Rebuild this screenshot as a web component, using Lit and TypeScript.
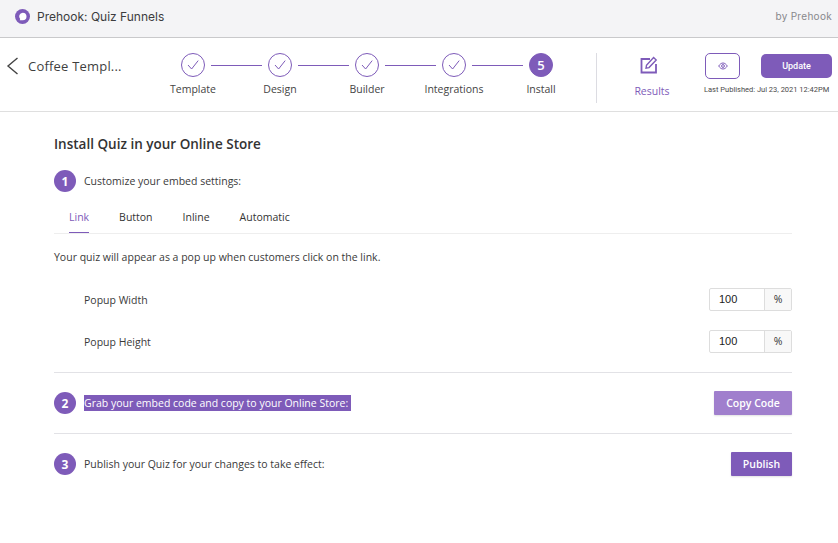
import { LitElement, html, css, TemplateResult } from 'lit';
import { customElement } from 'lit/decorators.js';
import { classMap } from 'lit/directives/class-map.js';

const STEPS = ['Template', 'Design', 'Builder', 'Integrations', 'Install'];
const TABS = ['Link', 'Button', 'Inline', 'Automatic'];

@customElement('app-root')
export class AppRoot extends LitElement {
  static styles = css`
    :host {
      display: block;
      height: 543px;
      background: #fff;
      overflow: hidden;
      font-family: 'Open Sans', sans-serif;
      font-size: 10.5px;
      color: #3a3a3a;
    }

    .topbar {
      height: 32px;
      box-sizing: content-box;
      display: flex;
      align-items: center;
      padding: 0 6px 5px 15px;
      background: #f4f4f6;
      border-bottom: 1px solid #c9c9cb;
      font-family: Inter, sans-serif;
    }

    .topbar svg {
      display: block;
      margin-right: 7px;
    }

    .app-name {
      font-size: 12px;
      color: #3c3c3e;
    }

    .by {
      margin-left: auto;
      font-size: 10px;
      letter-spacing: 0.3px;
      color: #88888c;
    }

    .header {
      height: 73px;
      display: flex;
      border-bottom: 1px solid #dfdfdf;
    }

    .back {
      display: flex;
      align-items: flex-start;
      width: 181px;
      padding: 18px 0 0 6px;
      box-sizing: border-box;
    }

    .back svg {
      display: block;
      margin: 1px 9px 0 0;
    }

    .back span {
      font-size: 13px;
      line-height: 20px;
      letter-spacing: 0.2px;
      color: #3f3f3f;
    }

    .steps {
      display: flex;
      align-items: flex-start;
      padding-top: 15px;
      width: 372px;
    }

    .step {
      width: 24px;
      display: flex;
      flex-direction: column;
      align-items: center;
    }

    .circle {
      width: 24px;
      height: 24px;
      box-sizing: border-box;
      border: 1px solid #7e5bb9;
      border-radius: 50%;
      display: flex;
      align-items: center;
      justify-content: center;
      flex: none;
    }

    .circle.current {
      background: #7e5bb9;
      color: #fff;
      font-size: 13px;
      font-weight: 600;
    }

    .step-label {
      margin-top: 5px;
      font-size: 10.5px;
      line-height: 14px;
      white-space: nowrap;
      color: #444;
    }

    .connector {
      width: 51px;
      height: 1px;
      margin: 12px 6px 0;
      background: #7e5bb9;
      flex: none;
    }

    .divider-v {
      width: 1px;
      height: 50px;
      margin: 15px 0 0 43px;
      background: #dcdce2;
    }

    .results {
      width: 110px;
      padding-top: 18px;
      display: flex;
      flex-direction: column;
      align-items: center;
      color: #7e5bb9;
      font-size: 10.5px;
      line-height: 14px;
    }

    .results svg {
      margin-right: 7px;
    }

    .results span {
      margin-top: 10px;
    }

    .publish-box {
      padding: 15px 0 0 0;
      margin-left: -3px;
      width: 128px;
      display: flex;
      flex-direction: column;
    }

    .publish-actions {
      display: flex;
      justify-content: space-between;
      align-items: center;
    }

    .eye {
      width: 35px;
      height: 26px;
      box-sizing: border-box;
      border: 1px solid #7e5bb9;
      border-radius: 5px;
      display: flex;
      align-items: center;
      justify-content: center;
      margin-left: 1px;
    }

    .update {
      width: 71px;
      height: 24px;
      border-radius: 5px;
      background: #7e5bb9;
      color: #fff;
      font-family: Roboto, sans-serif;
      font-size: 9px;
      font-weight: 500;
      display: flex;
      align-items: center;
      justify-content: center;
    }

    .last {
      margin-top: 5px;
      font-family: Roboto, sans-serif;
      font-size: 7.5px;
      line-height: 11px;
      white-space: nowrap;
      color: #4a4a4a;
    }

    main {
      width: 738px;
      margin-left: 54px;
    }

    h1 {
      margin: 0;
      padding-top: 22px;
      font-size: 13.5px;
      line-height: 20px;
      font-weight: 600;
      color: #333;
    }

    .section {
      display: flex;
      align-items: center;
      gap: 8px;
    }

    .num {
      width: 22px;
      height: 22px;
      border-radius: 50%;
      background: #7e5bb9;
      color: #fff;
      font-size: 12px;
      font-weight: 700;
      display: flex;
      align-items: center;
      justify-content: center;
      flex: none;
    }

    .first {
      margin-top: 16px;
    }

    .tabs {
      margin-top: 13px;
      height: 28px;
      display: flex;
      padding-left: 15px;
      border-bottom: 1px solid #eee;
    }

    .tab {
      height: 28px;
      box-sizing: border-box;
      line-height: 25px;
      margin-right: 30px;
      color: #333;
    }

    .tab.active {
      color: #7e5bb9;
      border-bottom: 1px solid #7e5bb9;
    }

    .intro {
      margin: 16px 0 0;
      line-height: 15px;
    }

    .field {
      display: flex;
      align-items: center;
      justify-content: space-between;
      height: 23px;
      padding-left: 30px;
      margin-top: 19px;
    }

    .field.first-field {
      margin-top: 23px;
    }

    .input {
      display: flex;
      width: 83px;
      height: 23px;
      box-sizing: border-box;
      border: 1px solid #ddd;
      border-radius: 2px;
      line-height: 21px;
      color: #333;
    }

    .input .value {
      width: 54px;
      padding-left: 9px;
      box-sizing: border-box;
      font-family: 'Liberation Sans', sans-serif;
      font-size: 11px;
      color: #222;
    }

    .input .unit {
      flex: 1;
      text-align: center;
      background: #f8f8f8;
      border-left: 1px solid #ddd;
    }

    hr {
      border: none;
      height: 1px;
      background: #e2e2e6;
      margin: 0;
    }

    .rule-a {
      margin-top: 19px;
    }

    .action {
      height: 60px;
      justify-content: flex-start;
    }

    .selected {
      background: #7e5bb9;
      color: #fff;
      line-height: 16px;
      padding-right: 3px;
      display: block;
    }

    .btn {
      margin-left: auto;
      height: 24px;
      border-radius: 1px;
      display: flex;
      align-items: center;
      justify-content: center;
      color: #fff;
      font-size: 10.5px;
      font-weight: 600;
      background: #7e5bb9;
      box-shadow: 0 1px 2px rgba(0, 0, 0, 0.12);
    }

    .btn.copy {
      width: 78px;
      background: #a07fcd;
    }

    .btn.publish {
      width: 61px;
    }
  `;

  private check(): TemplateResult {
    return html`<svg width="14" height="12" viewBox="0 0 14 12" fill="none">
      <path d="M2 6l3.6 4L12.2 1.6" stroke="#7e5bb9" stroke-width="1" />
    </svg>`;
  }

  render(): TemplateResult {
    return html`
      <div class="topbar">
        <svg width="15" height="15" viewBox="0 0 15 15">
          <circle cx="7.5" cy="7.5" r="7.5" fill="#7e5bb9" />
          <path
            d="M7.700 3.700a3.800 3.800 0 0 1 0 7.600H4.700l.5-1.200A3.800 3.800 0 0 1 7.700 3.700z"
            fill="#fff"
          />
        </svg>
        <span class="app-name">Prehook: Quiz Funnels</span>
        <span class="by">by Prehook</span>
      </div>
      <div class="header">
        <div class="back">
          <svg width="13" height="18" viewBox="0 0 13 18" fill="none">
            <path d="M11.500 1L2 9l9.500 8" stroke="#444" stroke-width="1.400" />
          </svg>
          <span>Coffee Templ...</span>
        </div>
        <div class="steps">
          ${STEPS.map(
            (label, i) => html`
              ${i > 0 ? html`<div class="connector"></div>` : ''}
              <div class="step">
                <div class=${classMap({ circle: true, current: i === 4 })}>
                  ${i === 4 ? '5' : this.check()}
                </div>
                <div class="step-label">${label}</div>
              </div>
            `
          )}
        </div>
        <div class="divider-v"></div>
        <div class="results">
          <svg width="18" height="18" viewBox="0 0 18 18" fill="none" stroke="#7e5bb9" stroke-width="1.800">
            <path d="M10 3H1.500v13.500H16V8" />
            <path d="M6.500 9.200L13.600 1.600l2.600 2.400L9 11.600l-3 .6z" stroke-width="1.400" />
          </svg>
          <span>Results</span>
        </div>
        <div class="publish-box">
          <div class="publish-actions">
            <div class="eye">
              <svg width="10" height="8" viewBox="0 0 10 8" fill="none" stroke="#7e5bb9" stroke-width="1">
                <path d="M.7 4C2 2 3.400 1 5 1s3 1 4.300 3C8 6 6.600 7 5 7S2 6 .7 4z" />
                <circle cx="5" cy="4" r="1.400" />
              </svg>
            </div>
            <div class="update">Update</div>
          </div>
          <div class="last">Last Published: Jul 23, 2021 12:42PM</div>
        </div>
      </div>
      <main>
        <h1>Install Quiz in your Online Store</h1>
        <div class="section first">
          <div class="num">1</div>
          <span>Customize your embed settings:</span>
        </div>
        <div class="tabs">
          ${TABS.map(
            (t, i) => html`<div class=${classMap({ tab: true, active: i === 0 })}>${t}</div>`
          )}
        </div>
        <p class="intro">Your quiz will appear as a pop up when customers click on the link.</p>
        <div class="field first-field">
          <span>Popup Width</span>
          <div class="input"><span class="value">100</span><span class="unit">%</span></div>
        </div>
        <div class="field">
          <span>Popup Height</span>
          <div class="input"><span class="value">100</span><span class="unit">%</span></div>
        </div>
        <hr class="rule-a" />
        <div class="section action">
          <div class="num">2</div>
          <span class="selected">Grab your embed code and copy to your Online Store:</span>
          <div class="btn copy">Copy Code</div>
        </div>
        <hr />
        <div class="section action">
          <div class="num">3</div>
          <span>Publish your Quiz for your changes to take effect:</span>
          <div class="btn publish">Publish</div>
        </div>
      </main>
    `;
  }
}

declare global {
  interface HTMLElementTagNameMap {
    'app-root': AppRoot;
  }
}
